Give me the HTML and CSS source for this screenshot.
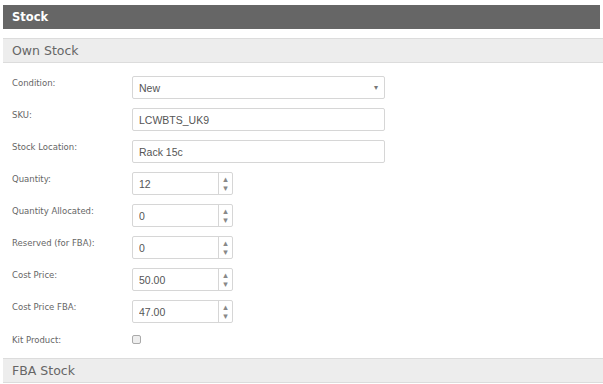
FILE: index.html
```html
<!DOCTYPE html>
<html lang="en">
<head>
    <meta charset="UTF-8">
    <title>Stock</title>
    <link rel="stylesheet" href="styles.css">
</head>
<body>

<div class="panel-title">Stock</div>

<div class="section-title">Own Stock</div>

<div class="form">
    <div class="row">
        <label>Condition:</label>
        <div class="select wide">
            <span>New</span>
            <span class="caret">&#9662;</span>
        </div>
    </div>

    <div class="row">
        <label>SKU:</label>
        <input class="text wide" type="text" value="LCWBTS_UK9">
    </div>

    <div class="row">
        <label>Stock Location:</label>
        <input class="text wide" type="text" value="Rack 15c">
    </div>

    <div class="row">
        <label>Quantity:</label>
        <div class="num">
            <input type="text" value="12">
            <div class="spin"><span>&#9652;</span><span>&#9662;</span></div>
        </div>
    </div>

    <div class="row">
        <label>Quantity Allocated:</label>
        <div class="num">
            <input type="text" value="0">
            <div class="spin"><span>&#9652;</span><span>&#9662;</span></div>
        </div>
    </div>

    <div class="row">
        <label>Reserved (for FBA):</label>
        <div class="num">
            <input type="text" value="0">
            <div class="spin"><span>&#9652;</span><span>&#9662;</span></div>
        </div>
    </div>

    <div class="row">
        <label>Cost Price:</label>
        <div class="num">
            <input type="text" value="50.00">
            <div class="spin"><span>&#9652;</span><span>&#9662;</span></div>
        </div>
    </div>

    <div class="row">
        <label>Cost Price FBA:</label>
        <div class="num">
            <input type="text" value="47.00">
            <div class="spin"><span>&#9652;</span><span>&#9662;</span></div>
        </div>
    </div>

    <div class="row check-row">
        <label>Kit Product:</label>
        <span class="checkbox"></span>
    </div>
</div>

<div class="section-title">FBA Stock</div>

</body>
</html>
```

FILE: styles.css
```css
body {
    margin: 0;
    background-color: #fff;
    font-family: "DejaVu Sans", Verdana, sans-serif;
}

.panel-title {
    margin: 5px 3px 0 3px;
    height: 24px;
    line-height: 24px;
    padding-left: 9px;
    background-color: #666;
    color: #fff;
    font-weight: bold;
    font-size: 11.5px;
}

.section-title {
    margin: 9px 0 0 3px;
    height: 23px;
    line-height: 23px;
    padding-left: 9px;
    background-color: #ededed;
    border-top: 1px solid #dcdcdc;
    border-bottom: 1px solid #dcdcdc;
    color: #666;
    font-size: 12.5px;
}

.form {
    padding: 13px 0 0 12px;
}

.row {
    display: flex;
    align-items: flex-start;
    height: 32px;
}

.row label {
    width: 120px;
    flex-shrink: 0;
    padding-top: 2px;
    font-size: 8.5px;
    color: #666;
}

.check-row {
    height: 17px;
}

.check-row label {
    padding-top: 3px;
}

.text, .select, .num input {
    font-family: "Liberation Sans", Arial, sans-serif;
    font-size: 10.5px;
    color: #555;
}

.wide {
    box-sizing: border-box;
    width: 253px;
    height: 23px;
    border: 1px solid #d6d6d6;
    border-radius: 2px;
    padding: 0 6px;
    outline: none;
}

.select {
    display: flex;
    align-items: center;
    justify-content: space-between;
}

.caret {
    font-size: 8px;
    color: #777;
}

.num {
    display: flex;
    box-sizing: border-box;
    width: 101px;
    height: 23px;
    border: 1px solid #d6d6d6;
    border-radius: 2px;
}

.num input {
    flex: 1;
    min-width: 0;
    border: none;
    padding: 0 6px;
    outline: none;
    background: transparent;
}

.spin {
    width: 13px;
    border-left: 1px solid #d6d6d6;
    display: flex;
    flex-direction: column;
    align-items: center;
    justify-content: center;
    font-size: 9px;
    line-height: 9px;
    color: #888;
}

.checkbox {
    display: block;
    margin-top: 3px;
    width: 7px;
    height: 7px;
    border: 1px solid #aaa;
    border-radius: 2px;
    background-color: #eee;
}
```
